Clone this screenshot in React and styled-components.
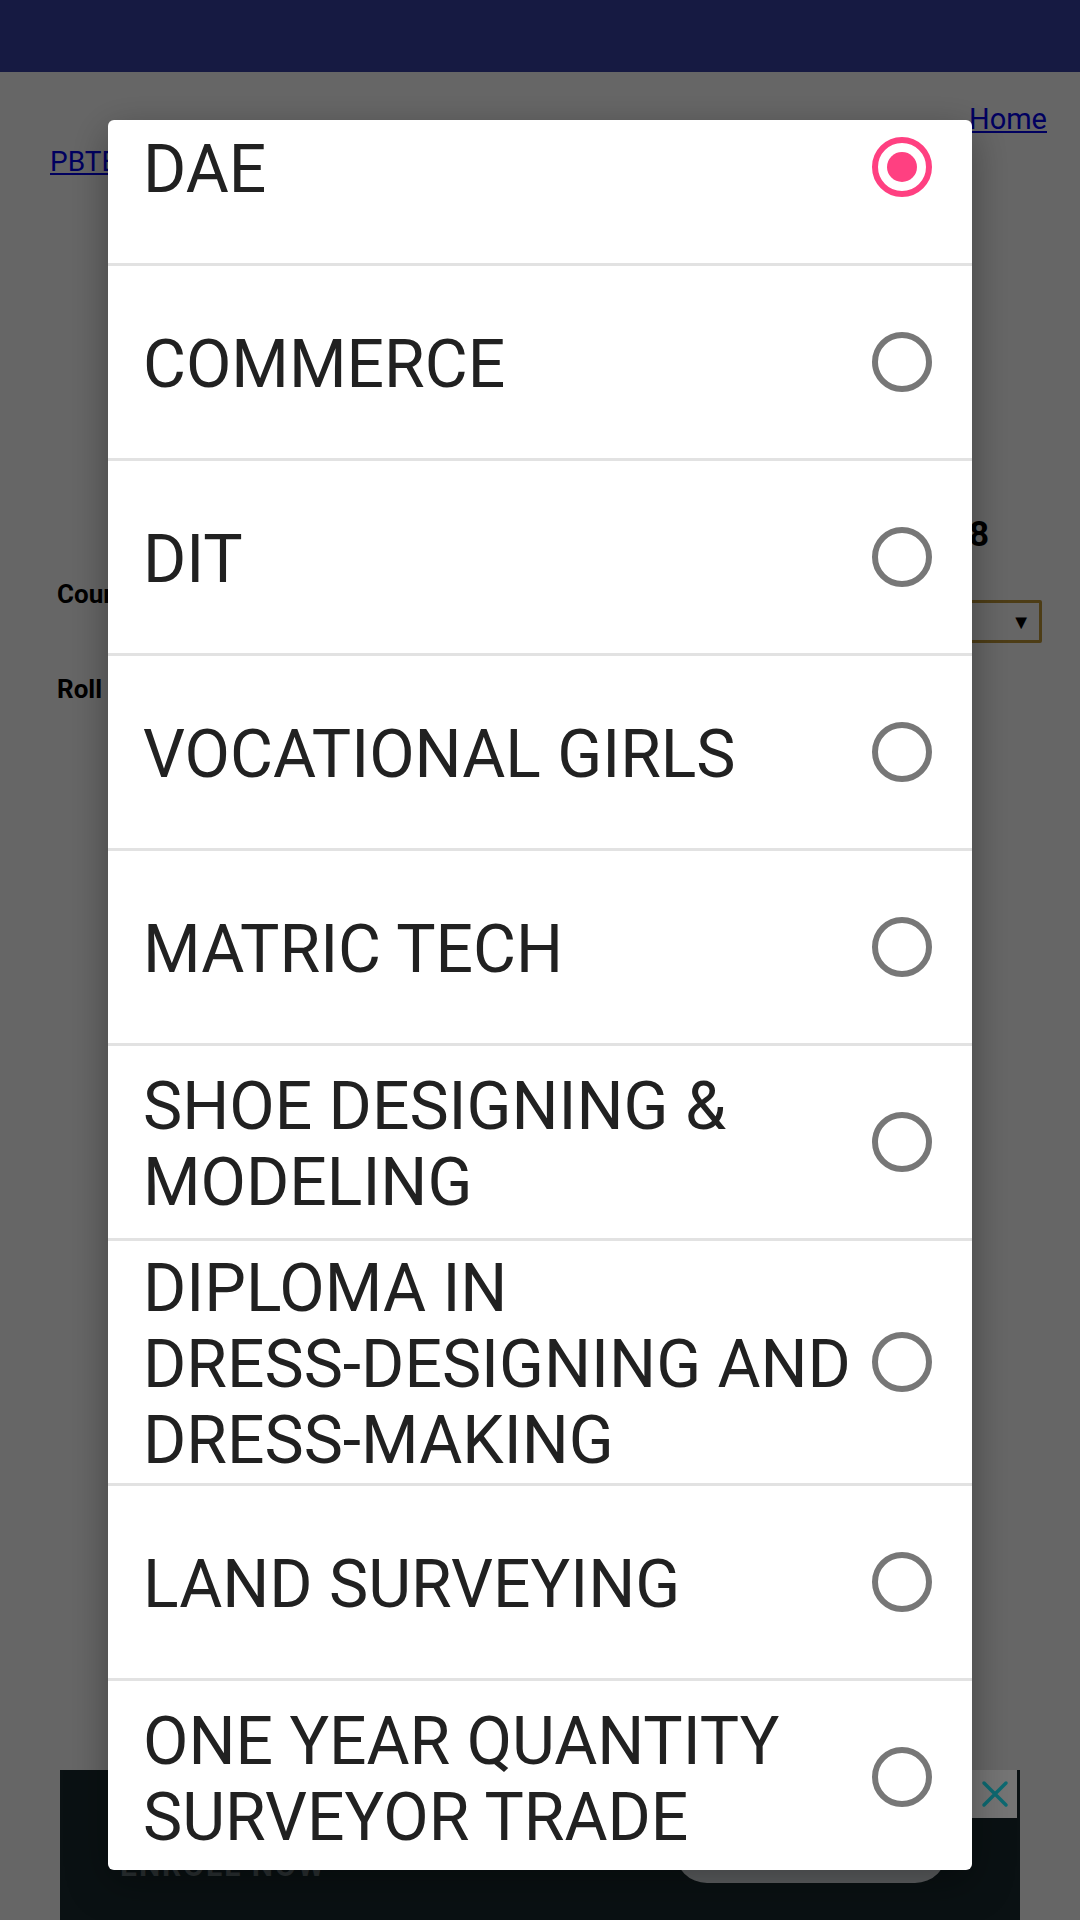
import styled, { createGlobalStyle } from "styled-components";

const GlobalStyle = createGlobalStyle`
  html, body {
    margin: 0;
    padding: 0;
    background: #ffffff;
    font-family: Roboto, "Noto Sans", sans-serif;
  }
  body {
    width: 1080px;
    height: 1920px;
    overflow: hidden;
  }
`;

const StatusBar = styled.div`
  height: 72px;
  background: #161a42;
  position: relative;
  z-index: 3;
`;

const Page = styled.div`
  display: flex;
  flex-direction: column;
  padding: 0 33px 0 50px;
`;

const TopLinks = styled.div`
  display: flex;
  justify-content: space-between;
  align-items: flex-start;
  padding-top: 30px;
`;

const Link = styled.a`
  font-family: Roboto, sans-serif;
  font-size: ${(p) => p.$size || 28}px;
  color: #0000ee;
  text-decoration: underline;
  margin-top: ${(p) => p.$offset || 0}px;
`;

const Heading = styled.h2`
  margin: 0;
  padding-top: 336px;
  padding-right: 58px;
  text-align: right;
  font-size: 35px;
  font-weight: 700;
  color: #000;
`;

const FormRow = styled.div`
  display: flex;
  justify-content: space-between;
  align-items: flex-start;
  padding-left: 7px;
  margin-top: ${(p) => p.$top}px;
`;

const Label = styled.span`
  font-size: 26px;
  font-weight: 700;
  color: #000;
`;

const Select = styled.div`
  margin: 21px 5px 0 0;
  width: 72px;
  height: 37px;
  border: 3px solid #c09838;
  border-radius: 2px;
  background: #ffffff;
  display: flex;
  align-items: center;
  justify-content: flex-end;
  padding-right: 8px;
  box-sizing: content-box;
  font-size: 20px;
  color: #000;
`;

const Scrim = styled.div`
  position: fixed;
  left: 0;
  right: 0;
  top: 72px;
  bottom: 0;
  background: rgba(0, 0, 0, 0.6);
  z-index: 1;
`;

const Ad = styled.div`
  position: fixed;
  left: 60px;
  top: 1770px;
  width: 960px;
  height: 150px;
  background: #0a1113;
  z-index: 2;
  display: flex;
  align-items: flex-end;
  justify-content: space-between;
  padding: 0 73px 37px 60px;
  box-sizing: border-box;
`;

const AdText = styled.span`
  font-size: 30px;
  font-weight: 700;
  color: #2c3234;
  letter-spacing: 2px;
`;

const AdButton = styled.div`
  width: 272px;
  height: 64px;
  border-radius: 32px;
  background: #5f6163;
`;

const AdClose = styled.div`
  position: absolute;
  top: 0;
  right: 3px;
  width: 45px;
  height: 48px;
  background: #757575;
  display: flex;
  align-items: center;
  justify-content: center;
`;

const Dialog = styled.div`
  position: fixed;
  left: 108px;
  top: 120px;
  width: 864px;
  height: 1750px;
  background: #ffffff;
  border-radius: 6px;
  overflow: hidden;
  z-index: 4;
  box-shadow: 0 12px 40px rgba(0, 0, 0, 0.35);
`;

const List = styled.ul`
  list-style: none;
  margin: -49px 0 0 0;
  padding: 0;
`;

const Item = styled.li`
  display: flex;
  align-items: center;
  justify-content: space-between;
  min-height: 178px;
  padding: 10px 40px 4px 35px;
  border-bottom: 3px solid #e2e2e2;
`;

const ItemText = styled.span`
  flex: 1;
  font-family: Roboto, sans-serif;
  font-size: 66px;
  line-height: 76px;
  color: #212121;
  padding-right: 8px;
`;

const Word = styled.span`
  white-space: nowrap;
`;

const RadioRing = styled.span`
  flex: none;
  width: 48px;
  height: 48px;
  margin-top: -6px;
  border-radius: 50%;
  border: 6px solid ${(p) => (p.$checked ? "#ff4081" : "#777777")};
  display: flex;
  align-items: center;
  justify-content: center;
`;

const RadioDot = styled.span`
  width: 30px;
  height: 30px;
  border-radius: 50%;
  background: #ff4081;
`;

const courses = [
  "DAE",
  "COMMERCE",
  "DIT",
  "VOCATIONAL GIRLS",
  "MATRIC TECH",
  "SHOE DESIGNING & MODELING",
  "DIPLOMA IN DRESS-DESIGNING AND DRESS-MAKING",
  "LAND SURVEYING",
  "ONE YEAR QUANTITY SURVEYOR TRADE",
];

const Radio = ({ checked }) => (
  <RadioRing $checked={checked}>{checked && <RadioDot />}</RadioRing>
);

// keep hyphenated words whole, the way the Android list wraps them
const CourseName = ({ text }) =>
  text.split(" ").map((w, i) => (
    <span key={i}>
      {i > 0 && " "}
      <Word>{w}</Word>
    </span>
  ));

export default function App() {
  return (
    <>
      <GlobalStyle />
      <StatusBar />
      <Page>
        <TopLinks>
          <Link href="#" $offset={43}>
            PBTE Results
          </Link>
          <Link href="#" $size={29}>
            Home
          </Link>
        </TopLinks>
        <Heading>Result DAE Annual 2018</Heading>
        <FormRow $top={24}>
          <Label>Course</Label>
          <Select>▼</Select>
        </FormRow>
        <FormRow $top={31}>
          <Label>Roll No</Label>
        </FormRow>
      </Page>
      <Scrim />
      <Ad>
        <AdText>ENROLL NOW</AdText>
        <AdButton />
        <AdClose>
          <svg width="28" height="28" viewBox="0 0 28 28">
            <path
              d="M3 3 L25 25 M25 3 L3 25"
              stroke="#0d6a72"
              strokeWidth="3.5"
              strokeLinecap="round"
            />
          </svg>
        </AdClose>
      </Ad>
      <Dialog>
        <List>
          {courses.map((c, i) => (
            <Item key={c}>
              <ItemText>
                <CourseName text={c} />
              </ItemText>
              <Radio checked={i === 0} />
            </Item>
          ))}
        </List>
      </Dialog>
    </>
  );
}
